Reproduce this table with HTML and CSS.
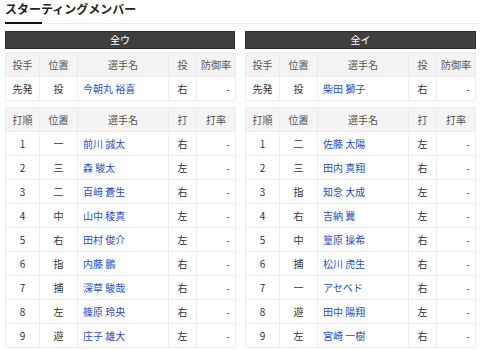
FILE: index.html
```html
<!DOCTYPE html>
<html lang="ja">
<head>
<meta charset="utf-8">
<link rel="stylesheet" href="styles.css">
</head>
<body>
<div class="title-wrap"><h2 class="title"><span class="title-text">スターティングメンバー</span></h2></div>
<div class="teams">
  <section class="team">
    <div class="team-bar">全ウ</div>
    <table class="tbl">
      <colgroup><col class="c1"><col class="c2"><col class="c3"><col class="c4"><col class="c5"></colgroup>
      <thead><tr><th>投手</th><th>位置</th><th>選手名</th><th>投</th><th>防御率</th></tr></thead>
      <tbody><tr><td>先発</td><td>投</td><td class="name">今朝丸 裕喜</td><td>右</td><td class="stat">-</td></tr></tbody>
    </table>
    <table class="tbl">
      <colgroup><col class="c1"><col class="c2"><col class="c3"><col class="c4"><col class="c5"></colgroup>
      <thead><tr><th>打順</th><th>位置</th><th>選手名</th><th>打</th><th>打率</th></tr></thead>
      <tbody>
        <tr><td>1</td><td>一</td><td class="name">前川 誠太</td><td>右</td><td class="stat">-</td></tr>
        <tr><td>2</td><td>三</td><td class="name">森 駿太</td><td>左</td><td class="stat">-</td></tr>
        <tr><td>3</td><td>二</td><td class="name">百﨑 蒼生</td><td>右</td><td class="stat">-</td></tr>
        <tr><td>4</td><td>中</td><td class="name">山中 稜真</td><td>左</td><td class="stat">-</td></tr>
        <tr><td>5</td><td>右</td><td class="name">田村 俊介</td><td>左</td><td class="stat">-</td></tr>
        <tr><td>6</td><td>指</td><td class="name">内藤 鵬</td><td>右</td><td class="stat">-</td></tr>
        <tr><td>7</td><td>捕</td><td class="name">深草 駿哉</td><td>右</td><td class="stat">-</td></tr>
        <tr><td>8</td><td>左</td><td class="name">篠原 玲央</td><td>右</td><td class="stat">-</td></tr>
        <tr><td>9</td><td>遊</td><td class="name">庄子 雄大</td><td>左</td><td class="stat">-</td></tr>
      </tbody>
    </table>
  </section>
  <section class="team">
    <div class="team-bar">全イ</div>
    <table class="tbl">
      <colgroup><col class="c1"><col class="c2"><col class="c3"><col class="c4"><col class="c5"></colgroup>
      <thead><tr><th>投手</th><th>位置</th><th>選手名</th><th>投</th><th>防御率</th></tr></thead>
      <tbody><tr><td>先発</td><td>投</td><td class="name">柴田 獅子</td><td>右</td><td class="stat">-</td></tr></tbody>
    </table>
    <table class="tbl">
      <colgroup><col class="c1"><col class="c2"><col class="c3"><col class="c4"><col class="c5"></colgroup>
      <thead><tr><th>打順</th><th>位置</th><th>選手名</th><th>打</th><th>打率</th></tr></thead>
      <tbody>
        <tr><td>1</td><td>二</td><td class="name">佐藤 太陽</td><td>左</td><td class="stat">-</td></tr>
        <tr><td>2</td><td>三</td><td class="name">田内 真翔</td><td>右</td><td class="stat">-</td></tr>
        <tr><td>3</td><td>指</td><td class="name">知念 大成</td><td>左</td><td class="stat">-</td></tr>
        <tr><td>4</td><td>右</td><td class="name">吉納 翼</td><td>左</td><td class="stat">-</td></tr>
        <tr><td>5</td><td>中</td><td class="name">篁原 操希</td><td>右</td><td class="stat">-</td></tr>
        <tr><td>6</td><td>捕</td><td class="name">松川 虎生</td><td>右</td><td class="stat">-</td></tr>
        <tr><td>7</td><td>一</td><td class="name">アセベド</td><td>右</td><td class="stat">-</td></tr>
        <tr><td>8</td><td>遊</td><td class="name">田中 陽翔</td><td>左</td><td class="stat">-</td></tr>
        <tr><td>9</td><td>左</td><td class="name">宮崎 一樹</td><td>右</td><td class="stat">-</td></tr>
      </tbody>
    </table>
  </section>
</div>
</body>
</html>
```
FILE: styles.css
```css
html, body {
  margin: 0;
  padding: 0;
  background: #fff;
}
body {
  font-family: "Noto Sans CJK JP", "Noto Sans", sans-serif;
  color: #333;
}
.title-wrap {
  border-bottom: 1px solid #ececec;
  padding: 0 5px;
}
.title {
  margin: 0;
  font-size: 12px;
  font-weight: bold;
  line-height: 16px;
  color: #222;
}
.title-text {
  display: inline-block;
  padding-top: 1px;
  padding-bottom: 6px;
  position: relative;
}
.title-text::after {
  content: "";
  position: absolute;
  left: 0;
  bottom: -1px;
  width: 37px;
  height: 2px;
  background: #111;
}
.teams {
  display: grid;
  grid-template-columns: 230px 231px;
  column-gap: 10px;
  padding: 7px 5px 0 5px;
}
.team-bar {
  background: #3f3f3f;
  border: 1px solid #2e2e2e;
  color: #fff;
  font-size: 10px;
  line-height: 16px;
  text-align: center;
  margin-bottom: 3px;
}
.tbl {
  width: 100%;
  border-collapse: collapse;
  table-layout: fixed;
  border: 1px solid #e4e4e4;
  margin-bottom: 6px;
  font-size: 10px;
}
.c1 { width: 34px; }
.c2 { width: 38px; }
.c3 { width: 91px; }
.c4 { width: 28px; }
.c5 { width: 39px; }
.tbl th, .tbl td {
  border: 1px solid #ececec;
  height: 23px;
  padding: 0;
  text-align: center;
  font-weight: normal;
}
.tbl th {
  background: #f4f4f4;
  color: #555;
}
.tbl td {
  color: #333;
}
.tbl td.name {
  text-align: left;
  padding-left: 5px;
  color: #1f4fbf;
}
.tbl td.stat {
  text-align: right;
  padding-right: 5px;
}
```
